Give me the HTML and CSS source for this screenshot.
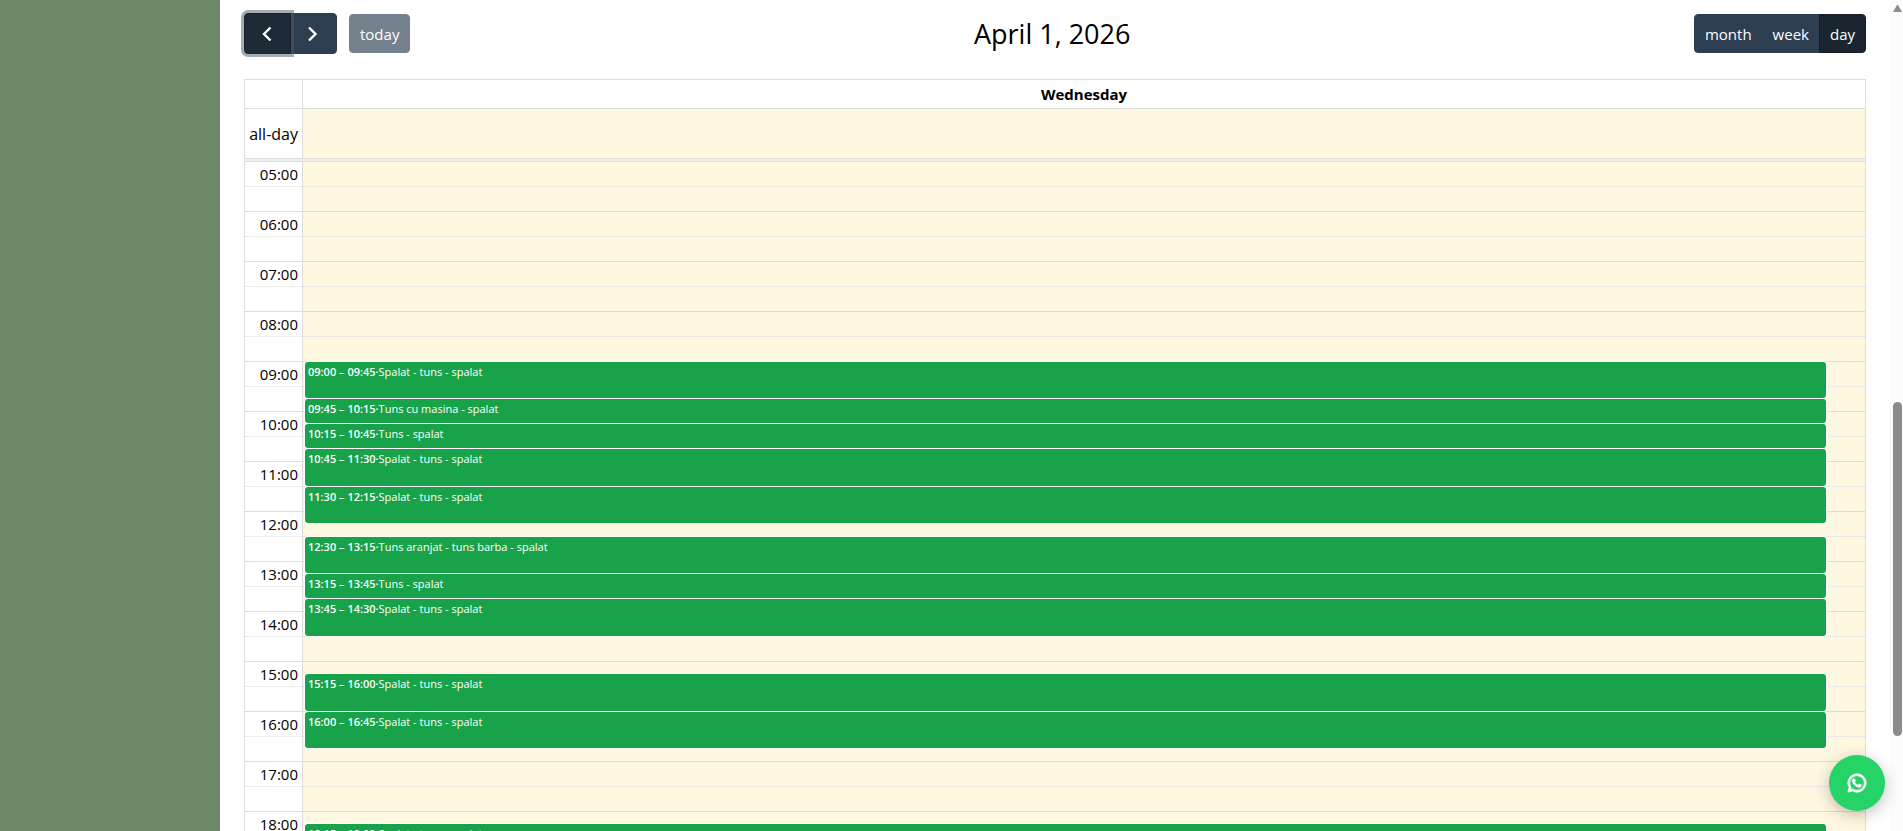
FILE: index.html
```html
<!DOCTYPE html>
<html lang="en">
<head>
    <meta charset="UTF-8">
    <meta name="viewport" content="width=device-width, initial-scale=1.0">
    <title>Calendar</title>
    <link rel="stylesheet" href="styles.css">
</head>
<body>

<aside class="sidebar"></aside>

<main class="content">
    <header class="toolbar">
        <div class="toolbar-left">
            <div class="btn-group">
                <button class="btn btn-icon focused" type="button" aria-label="Previous day">
                    <svg viewBox="0 0 24 24" width="24" height="24"><path d="M15.5 5.5L9 12l6.500 6.500"/></svg>
                </button>
                <button class="btn btn-icon" type="button" aria-label="Next day">
                    <svg viewBox="0 0 24 24" width="24" height="24"><path d="M8 5.500L14.500 12 8 18.500"/></svg>
                </button>
            </div>
            <button class="btn" type="button" disabled>today</button>
        </div>
        <h2 class="title">April 1, 2026</h2>
        <div class="btn-group">
            <button class="btn" type="button">month</button>
            <button class="btn" type="button">week</button>
            <button class="btn active" type="button">day</button>
        </div>
    </header>

    <div class="calendar">
        <table class="grid">
            <thead>
                <tr class="day-head">
                    <th class="axis"></th>
                    <th scope="col">Wednesday</th>
                </tr>
            </thead>
            <tbody>
                <tr class="all-day">
                    <td class="axis">all-day</td>
                    <td class="day"></td>
                </tr>
                <tr class="divider">
                    <td colspan="2"></td>
                </tr>
            </tbody>
            <tbody id="slots"></tbody>
        </table>
        <div class="events" id="events"></div>
    </div>
</main>

<div class="scrollbar">
    <div class="scroll-arrow"></div>
    <div class="scroll-thumb"></div>
</div>

<a class="whatsapp" href="#" aria-label="WhatsApp">
    <svg viewBox="0 0 24 24" width="22" height="22">
        <path d="M7.253 18.494l.724.423A7.953 7.953 0 0 0 12 20a8 8 0 1 0-8-8c0 1.436.377 2.813 1.084 4.024l.422.724-.653 2.401 2.4-.655zM2.004 22l1.352-4.968A9.954 9.954 0 0 1 2 12C2 6.477 6.477 2 12 2s10 4.477 10 10-4.477 10-10 10a9.954 9.954 0 0 1-5.03-1.355L2.004 22zM8.391 7.308c.134-.01.269-.01.403-.004.054.004.108.01.162.016.159.018.334.115.393.249.298.676.588 1.357.868 2.04.062.152.025.347-.093.537-.06.097-.154.233-.263.372-.113.145-.356.411-.356.411s-.099.118-.061.265c.014.056.06.137.102.205l.059.095c.256.427.6.86 1.02 1.268.12.116.237.235.363.346.468.413.998.75 1.57 1l.005.002c.085.037.128.057.252.11.062.026.126.049.191.066a.35.35 0 0 0 .367-.13c.724-.877.79-.934.796-.934v.002a.482.482 0 0 1 .378-.127c.06.004.121.015.177.04.531.243 1.4.622 1.4.622l.582.261c.098.047.187.158.19.265.004.067.01.175-.013.373-.032.259-.11.57-.188.733a1.155 1.155 0 0 1-.21.302 2.378 2.378 0 0 1-.33.288c-.125.092-.19.133-.19.133a4.89 4.89 0 0 1-.384.22 1.99 1.99 0 0 1-.833.23c-.185.01-.37.024-.556.014-.008 0-.568-.087-.568-.087a9.448 9.448 0 0 1-3.84-2.046c-.226-.199-.435-.413-.649-.626-.89-.885-1.562-1.84-1.97-2.742A3.47 3.47 0 0 1 6.9 9.62a2.729 2.729 0 0 1 .564-1.68c.073-.094.142-.192.261-.305.127-.12.207-.184.294-.228a.961.961 0 0 1 .371-.1z"/>
    </svg>
</a>

<script>
    const SLOT_HEIGHT = 25;   // half an hour
    const START_HOUR = 5;
    const END_HOUR = 20;

    const bookings = [
        { start: "09:00", end: "09:45", title: "Spalat - tuns - spalat" },
        { start: "09:45", end: "10:15", title: "Tuns cu masina - spalat" },
        { start: "10:15", end: "10:45", title: "Tuns - spalat" },
        { start: "10:45", end: "11:30", title: "Spalat - tuns - spalat" },
        { start: "11:30", end: "12:15", title: "Spalat - tuns - spalat" },
        { start: "12:30", end: "13:15", title: "Tuns aranjat - tuns barba - spalat" },
        { start: "13:15", end: "13:45", title: "Tuns - spalat" },
        { start: "13:45", end: "14:30", title: "Spalat - tuns - spalat" },
        { start: "15:15", end: "16:00", title: "Spalat - tuns - spalat" },
        { start: "16:00", end: "16:45", title: "Spalat - tuns - spalat" },
        { start: "18:15", end: "19:00", title: "Spalat - tuns - spalat" }
    ];

    // Offset from the first slot, in pixels
    function timeToOffset(time) {
        const [hours, minutes] = time.split(":").map(Number);
        return Math.floor(((hours - START_HOUR) * 60 + minutes) * SLOT_HEIGHT / 30);
    }

    // Two rows for each hour: the labelled one and the half hour
    const slots = document.getElementById("slots");
    for (let hour = START_HOUR; hour < END_HOUR; hour++) {
        const label = String(hour).padStart(2, "0") + ":00";
        slots.innerHTML += `
            <tr class="slot"><td class="axis">${label}</td><td class="day"></td></tr>
            <tr class="slot half"><td class="axis"></td><td class="day"></td></tr>`;
    }

    const events = document.getElementById("events");
    bookings.forEach(booking => {
        const top = timeToOffset(booking.start);
        const height = timeToOffset(booking.end) - top - 1;
        const item = document.createElement("a");
        item.href = "#";
        item.className = "event";
        item.style.top = top + "px";
        item.style.height = height + "px";
        item.innerHTML = `<span class="event-time">${booking.start} – ${booking.end}·</span><span>${booking.title}</span>`;
        events.appendChild(item);
    });
</script>

</body>
</html>
```

FILE: styles.css
```css
* {
    box-sizing: border-box;
}

body {
    display: flex;
    height: 100vh;
    margin: 0;
    overflow: hidden;
    font-family: "Open Sans", "Noto Sans", sans-serif;
    font-size: 15px;
    color: #000;
    background-color: #fff;
}

.sidebar {
    flex: 0 0 220px;
    background-color: #6c8866;
}

.content {
    flex: 1;
    min-width: 0;
    padding: 13px 24px 0;
}

/* Toolbar */
.toolbar {
    display: flex;
    justify-content: space-between;
    align-items: center;
    margin-bottom: 25px;
}

.toolbar-left {
    display: flex;
    align-items: center;
    gap: 12px;
}

.title {
    margin: 0;
    font-size: 27px;
    font-weight: 400;
    line-height: 32px;
}

.btn-group {
    display: flex;
}

.btn {
    height: 39px;
    padding: 0 10px;
    border: 1px solid #2c3e50;
    border-radius: 4px;
    background-color: #2c3e50;
    color: #fff;
    font-family: inherit;
    font-size: 15px;
    line-height: 24px;
    cursor: pointer;
}

.btn:disabled {
    opacity: 0.65;
    cursor: default;
}

.btn-group .btn:not(:last-child) {
    border-top-right-radius: 0;
    border-bottom-right-radius: 0;
}

.btn-group .btn:not(:first-child) {
    margin-left: -1px;
    border-top-left-radius: 0;
    border-bottom-left-radius: 0;
}

.btn-icon {
    height: 41px;
    width: 47px;
}

.btn-icon svg {
    display: block;
    fill: none;
    stroke: #fff;
    stroke-width: 2.4;
}

.btn.active {
    border-color: #151e27;
    background-color: #1a252f;
}

.btn.focused {
    position: relative;
    border-color: #1a252f;
    background-color: #1e2b37;
    box-shadow: 0 0 0 3px rgba(76, 91, 106, 0.5);
}

/* Day grid */
.calendar {
    position: relative;
}

.grid {
    width: 100%;
    border-collapse: collapse;
    table-layout: fixed;
}

.grid th,
.grid td {
    padding: 0;
    border: 1px solid #ddd;
}

.grid .axis {
    width: 58px;
    padding-right: 4px;
    text-align: right;
}

.day-head {
    height: 29px;
}

.day {
    background-color: #fff8e1;
}

.all-day {
    height: 50px;
    font-size: 16px;
}

.divider {
    height: 3px;
}

.grid .divider td {
    background-color: #efeff0;
}

.slot {
    height: 25px;
    line-height: 24px;
}

.grid .slot td {
    border-bottom: 0;
}

.grid .half td {
    border-top-style: dotted;
}

/* Bookings laid over the day column */
.events {
    position: absolute;
    top: 83px;
    left: 61px;
    right: 40px;
}

.event {
    position: absolute;
    left: 0;
    right: 0;
    padding: 2px 3px;
    border-radius: 3px;
    background-color: #18a34a;
    box-shadow: 0 0 0 1px #fff;
    color: #fff;
    font-size: 11px;
    font-weight: 500;
    line-height: 16px;
    text-decoration: none;
    white-space: nowrap;
    overflow: hidden;
}

.event-time {
    font-weight: 600;
}

/* Page scrollbar */
.scrollbar {
    position: relative;
    flex: 0 0 13px;
    background-color: #fcfcfc;
}

.scroll-arrow {
    width: 9px;
    margin: 5px 0 0 3px;
    border: 4px solid transparent;
    border-top: 0;
    border-bottom: 7px solid #8b8b8b;
}

.scroll-thumb {
    position: absolute;
    top: 402px;
    right: 1px;
    width: 9px;
    height: 334px;
    border-radius: 5px;
    background-color: #8b8b8b;
}

.whatsapp {
    position: fixed;
    right: 18px;
    bottom: 20px;
    display: flex;
    align-items: center;
    justify-content: center;
    width: 56px;
    height: 56px;
    border-radius: 50%;
    background-color: #25d366;
    box-shadow: 0 4px 16px rgba(0, 0, 0, 0.25);
}

.whatsapp svg {
    fill: #fff;
    stroke: #fff;
    stroke-width: 0.8;
}
```
